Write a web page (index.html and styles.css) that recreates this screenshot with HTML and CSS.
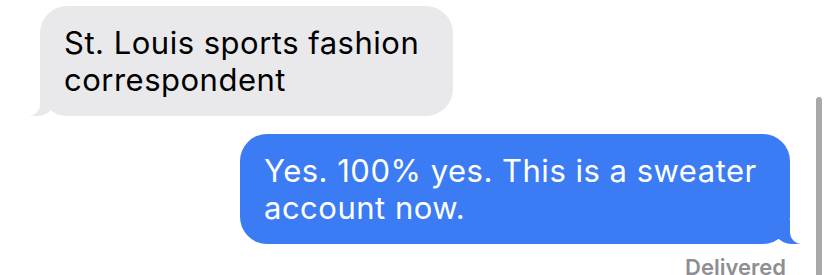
FILE: index.html
```html
<!DOCTYPE html>
<html lang="en">
<head>
  <meta charset="UTF-8">
  <meta name="viewport" content="width=device-width, initial-scale=1.0">
  <title>Messages</title>
  <link rel="stylesheet" href="styles.css">
</head>
<body>
  <div class="thread">
    <div class="bubble them">St. Louis sports fashion correspondent</div>
    <div class="bubble me">Yes. 100% yes. This is a sweater account now.</div>
    <div class="status">Delivered</div>
  </div>
  <div class="scroll-indicator"></div>
</body>
</html>
```

FILE: styles.css
```css
* {
  margin: 0;
  padding: 0;
  box-sizing: border-box;
}

body {
  width: 828px;
  height: 275px;
  background: #ffffff;
  font-family: 'Inter', 'Liberation Sans', sans-serif;
  overflow: hidden;
  position: relative;
}

.thread {
  display: flex;
  flex-direction: column;
  padding: 6px 38px 0 40px;
}

.bubble {
  position: relative;
  font-size: 31px;
  letter-spacing: 0.5px;
  line-height: 37px;
  padding: 18px 24px;
  border-radius: 27px;
}

.them {
  align-self: flex-start;
  width: 413px;
  background: #e9e9eb;
  color: #000000;
}

.them::before {
  content: '';
  position: absolute;
  bottom: 0;
  left: -11px;
  width: 26px;
  height: 24px;
  background: #e9e9eb;
  border-bottom-right-radius: 18px 16px;
}

.them::after {
  content: '';
  position: absolute;
  bottom: 0;
  left: -26px;
  width: 26px;
  height: 26px;
  background: #ffffff;
  border-bottom-right-radius: 12px;
}

.me {
  align-self: flex-end;
  width: 550px;
  margin-top: 18px;
  background: #3b7cf5;
  color: #ffffff;
}

.me::before {
  content: '';
  position: absolute;
  bottom: 0;
  right: -10px;
  width: 26px;
  height: 24px;
  background: #3b7cf5;
  border-bottom-left-radius: 18px 16px;
}

.me::after {
  content: '';
  position: absolute;
  bottom: 0;
  right: -26px;
  width: 26px;
  height: 26px;
  background: #ffffff;
  border-bottom-left-radius: 12px;
}

.status {
  align-self: flex-end;
  margin-top: 10px;
  margin-right: 4px;
  font-size: 22px;
  line-height: 26px;
  font-weight: 600;
  color: #8e8e93;
}

.scroll-indicator {
  position: absolute;
  top: 97px;
  right: 6px;
  width: 6px;
  height: 200px;
  background: #a9a9a9;
  border-radius: 3px;
}
```
